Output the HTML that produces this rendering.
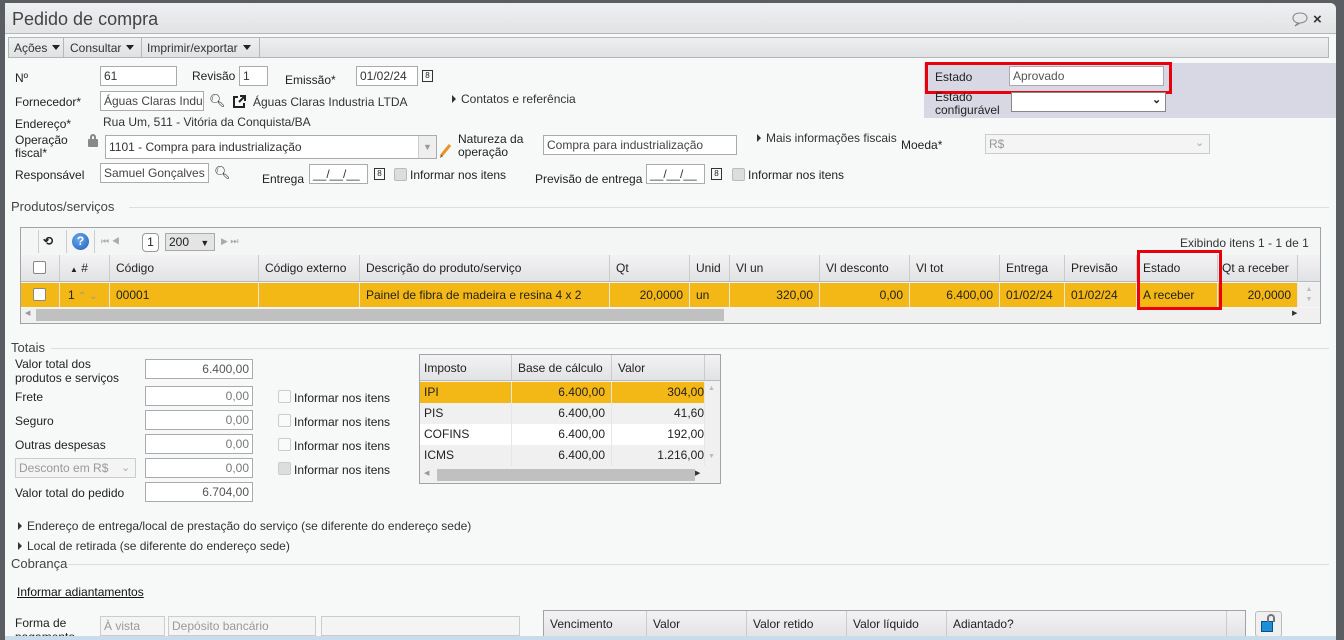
<!DOCTYPE html>
<html><head><meta charset="utf-8">
<style>
*{box-sizing:border-box;margin:0;padding:0}
body{width:1344px;height:640px;overflow:hidden;background:#5a5e63;font-family:"Liberation Sans",sans-serif;font-size:12px;color:#222;position:relative}
.a{position:absolute;white-space:nowrap}
.win{position:absolute;left:5px;top:3px;width:1331px;height:637px;background:#f7f8f8;border-top-right-radius:6px;overflow:hidden}
.inp{position:absolute;background:#fff;border:1px solid #a9abae;height:20px;padding:2px 3px;font-size:12px;color:#333;white-space:nowrap;overflow:hidden}
.dis{background:#f4f4f4;color:#999;border-color:#ccc}
.r{text-align:right}
.cb{position:absolute;width:13px;height:13px;border:1px solid #bbb;background:#fafafa;border-radius:2px}
.leg{position:absolute;height:1px;background:#ddd}
.grid{position:absolute;border:1px solid #a0a3a7;background:#fff}
.hd{position:absolute;background:linear-gradient(#f3f3f4,#e1e2e4);border-bottom:1px solid #b8babd}
.c{position:absolute;top:0;height:100%;border-right:1px solid #c9cbce;padding:0 6px;line-height:26px;white-space:nowrap;overflow:hidden}
.row .c{border-right:1px solid #e6e6e6;line-height:24px}
.tri{display:inline-block;width:0;height:0;border-left:4px solid #333;border-top:4px solid transparent;border-bottom:4px solid transparent;margin-right:5px;vertical-align:0}
.dd{display:inline-block;width:0;height:0;border-top:5px solid #222;border-left:4px solid transparent;border-right:4px solid transparent;margin-left:5px;vertical-align:2px}
</style></head><body>
<div class="win">
 <div class="a" style="left:0;top:0;width:1331px;height:31px;background:linear-gradient(#eeeff0,#e2e3e5);border-bottom:1px solid #b4b6b9"></div>
 <div class="a" style="left:7px;top:6px;font-size:18px;color:#444">Pedido de compra</div>
 <svg class="a" style="left:1286px;top:8px" width="18" height="16" viewBox="0 0 18 16"><path d="M9 2C4.5 2 2 4.3 2 7s2.3 4.6 5 4.9L4 15l5-3c4.2-.2 7-2.3 7-5s-2.5-5-7-5z" fill="none" stroke="#888" stroke-width="1.1"/></svg>
 <div class="a" style="left:1308px;top:8px;font-size:15px;font-weight:bold;color:#333">×</div>
 <div class="a" style="left:3px;top:34px;width:1321px;height:21px;background:linear-gradient(#eeeff0,#e0e1e3);border:1px solid #b4b6b9"></div>
 <div class="a" style="left:9px;top:38px;color:#333">Ações<span class="dd"></span></div>
 <div class="a" style="left:58px;top:35px;width:1px;height:19px;background:#b4b6b9"></div>
 <div class="a" style="left:65px;top:38px;color:#333">Consultar<span class="dd"></span></div>
 <div class="a" style="left:136px;top:35px;width:1px;height:19px;background:#b4b6b9"></div>
 <div class="a" style="left:142px;top:38px;color:#333">Imprimir/exportar<span class="dd"></span></div>
 <div class="a" style="left:254px;top:35px;width:1px;height:19px;background:#b4b6b9"></div>

 <div class="a" style="left:919px;top:60px;width:412px;height:55px;background:#d8d8e4"></div>
 <div class="a" style="left:920px;top:59px;width:247px;height:32px;border:3px solid #e8000b"></div>
 <div class="a" style="left:930px;top:67px">Estado</div>
 <div class="inp" style="left:1004px;top:63px;width:155px;color:#555">Aprovado</div>
 <div class="a" style="left:930px;top:88px;line-height:13px">Estado<br>configurável</div>
 <div class="inp" style="left:1006px;top:89px;width:155px;border-color:#888"></div>
 <div class="a" style="left:1147px;top:90px;font-size:11px;font-weight:bold">⌄</div>

 <div class="a" style="left:10px;top:68px">Nº</div>
 <div class="inp" style="left:95px;top:63px;width:77px">61</div>
 <div class="a" style="left:187px;top:66px">Revisão</div>
 <div class="inp" style="left:234px;top:63px;width:29px">1</div>
 <div class="a" style="left:280px;top:70px">Emissão*</div>
 <div class="inp" style="left:351px;top:63px;width:62px">01/02/24</div>
 <div class="a" style="left:417px;top:67px;width:11px;height:12px;border:1px solid #333;font-size:8px;text-align:center;line-height:10px">8</div>

 <div class="a" style="left:10px;top:92px">Fornecedor*</div>
 <div class="inp" style="left:95px;top:88px;width:104px;color:#444">Águas Claras Indus</div>
 <div class="a" style="left:204px;top:90px;font-size:13px">&#x1F50D;&#xFE0E;</div>
 <svg class="a" style="left:226px;top:91px" width="16" height="16" viewBox="0 0 16 16"><path d="M7 3H3v10h10V9" fill="none" stroke="#222" stroke-width="2"/><path d="M8 8l6-6M9 2h5v5" fill="none" stroke="#222" stroke-width="2"/></svg>
 <div class="a" style="left:248px;top:92px;color:#333">Águas Claras Industria LTDA</div>
 <div class="a" style="left:447px;top:89px;color:#333"><span class="tri"></span>Contatos e referência</div>

 <div class="a" style="left:10px;top:114px">Endereço*</div>
 <div class="a" style="left:98px;top:112px;color:#333">Rua Um, 511 - Vitória da Conquista/BA</div>

 <div class="a" style="left:10px;top:131px;line-height:13px">Operação<br>fiscal*</div>
 <div class="a" style="left:83px;top:136px;width:10px;height:8px;background:#888;border-radius:1px"></div>
 <div class="a" style="left:85px;top:131px;width:6px;height:7px;border:2px solid #888;border-bottom:none;border-radius:3px 3px 0 0"></div>
 <div class="inp" style="left:100px;top:132px;width:332px;height:24px;padding-top:4px">1101 - Compra para industrialização</div>
 <div class="a" style="left:413px;top:133px;width:18px;height:22px;background:#eee;border-left:1px solid #ccc;color:#999;text-align:center;font-size:9px;line-height:22px">▼</div>
 <svg class="a" style="left:434px;top:138px" width="14" height="18" viewBox="0 0 14 18"><path d="M2 15L11 4" stroke="#e8942a" stroke-width="3"/><path d="M1 17l1-3 2 1z" fill="#555"/></svg>
 <div class="a" style="left:453px;top:130px;line-height:13px">Natureza da<br>operação</div>
 <div class="inp" style="left:538px;top:132px;width:194px;color:#444">Compra para industrialização</div>
 <div class="a" style="left:752px;top:128px;color:#333"><span class="tri"></span>Mais informações fiscais</div>
 <div class="a" style="left:896px;top:135px">Moeda*</div>
 <div class="inp dis" style="left:980px;top:131px;width:225px">R$</div>
 <div class="a" style="left:1190px;top:133px;color:#aaa;font-size:11px">⌄</div>

 <div class="a" style="left:10px;top:165px">Responsável</div>
 <div class="inp" style="left:95px;top:160px;width:109px;color:#444">Samuel Gonçalves</div>
 <div class="a" style="left:209px;top:162px;font-size:13px">&#x1F50D;&#xFE0E;</div>
 <div class="a" style="left:257px;top:169px">Entrega</div>
 <div class="inp" style="left:304px;top:161px;width:59px">__/__/__</div>
 <div class="a" style="left:369px;top:165px;width:11px;height:12px;border:1px solid #333;font-size:8px;text-align:center;line-height:10px">8</div>
 <div class="cb" style="left:389px;top:165px;background:#ddd"></div>
 <div class="a" style="left:405px;top:165px">Informar nos itens</div>
 <div class="a" style="left:530px;top:169px">Previsão de entrega</div>
 <div class="inp" style="left:641px;top:161px;width:59px">__/__/__</div>
 <div class="a" style="left:706px;top:165px;width:11px;height:12px;border:1px solid #333;font-size:8px;text-align:center;line-height:10px">8</div>
 <div class="cb" style="left:727px;top:165px;background:#ddd"></div>
 <div class="a" style="left:743px;top:165px">Informar nos itens</div>

 <div class="a" style="left:6px;top:196px;font-size:13px;color:#444">Produtos/serviços</div>
 <div class="leg" style="left:124px;top:204px;width:1200px"></div>
 <div class="grid" style="left:15px;top:224px;width:1301px;height:97px;background:#f4f5f5">
  <div class="a" style="left:17px;top:2px;width:1px;height:23px;background:#ccc"></div>
  <div class="a" style="left:22px;top:6px;font-size:12px;font-weight:bold">⟲</div>
  <div class="a" style="left:45px;top:2px;width:1px;height:23px;background:#ccc"></div>
  <div class="a" style="left:51px;top:5px;width:17px;height:17px;border-radius:50%;background:radial-gradient(circle at 40% 35%,#6aa9ec,#1f5fb8);color:#fff;font-weight:bold;font-size:12px;text-align:center;line-height:17px">?</div>
  <div class="a" style="left:73px;top:2px;width:1px;height:23px;background:#ccc"></div>
  <div class="a" style="left:80px;top:8px;color:#aaa;font-size:9px">⏮ ◀</div>
  <div class="a" style="left:121px;top:5px;width:17px;height:19px;border:1px solid #999;border-radius:4px;background:#fff;text-align:center;line-height:17px">1</div>
  <div class="a" style="left:144px;top:5px;width:50px;height:18px;border:1px solid #aaa;background:#e4e4e4;padding-left:3px;line-height:16px">200 <span style="font-size:9px;margin-left:8px">▼</span></div>
  <div class="a" style="left:200px;top:8px;color:#aaa;font-size:9px">▶ ⏭</div>
  <div class="a" style="left:1159px;top:8px;color:#333">Exibindo itens 1 - 1 de 1</div>
  <div class="hd" style="left:0;top:27px;width:1299px;height:27px">
   <div class="c" style="left:0;width:39px"><div class="cb" style="left:12px;top:6px;background:#fff;border-color:#888"></div></div>
   <div class="c" style="left:39px;width:50px;padding-left:10px"><span style="font-size:8px">▲</span> #</div>
   <div class="c" style="left:89px;width:149px">Código</div>
   <div class="c" style="left:238px;width:101px">Código externo</div>
   <div class="c" style="left:339px;width:250px">Descrição do produto/serviço</div>
   <div class="c" style="left:589px;width:80px">Qt</div>
   <div class="c" style="left:669px;width:40px">Unid</div>
   <div class="c" style="left:709px;width:90px">Vl un</div>
   <div class="c" style="left:799px;width:90px">Vl desconto</div>
   <div class="c" style="left:889px;width:90px">Vl tot</div>
   <div class="c" style="left:979px;width:65px">Entrega</div>
   <div class="c" style="left:1044px;width:72px">Previsão</div>
   <div class="c" style="left:1116px;width:81px">Estado</div>
   <div class="c" style="left:1197px;width:80px;padding:0 4px">Qt a receber</div>
  </div>
  <div class="row a" style="left:0;top:55px;width:1277px;height:24px;background:#f3b815">
   <div class="c" style="left:0;width:39px"><div class="cb" style="left:12px;top:5px;background:#fff;border-color:#888"></div></div>
   <div class="c" style="left:39px;width:50px;padding-left:8px">1 <span style="color:#999;font-size:10px">⌃ ⌄</span></div>
   <div class="c" style="left:89px;width:149px">00001</div>
   <div class="c" style="left:238px;width:101px"></div>
   <div class="c" style="left:339px;width:250px">Painel de fibra de madeira e resina 4 x 2</div>
   <div class="c r" style="left:589px;width:80px">20,0000</div>
   <div class="c" style="left:669px;width:40px">un</div>
   <div class="c r" style="left:709px;width:90px">320,00</div>
   <div class="c r" style="left:799px;width:90px">0,00</div>
   <div class="c r" style="left:889px;width:90px">6.400,00</div>
   <div class="c" style="left:979px;width:65px">01/02/24</div>
   <div class="c" style="left:1044px;width:72px">01/02/24</div>
   <div class="c" style="left:1116px;width:81px">A receber</div>
   <div class="c r" style="left:1197px;width:80px">20,0000</div>
  </div>
  <div class="a" style="left:1277px;top:55px;width:22px;height:24px;background:#f0f0f0;color:#bbb;font-size:7px;text-align:center;line-height:10px;padding-top:2px">▲<br>▼</div>
  <div class="a" style="left:0;top:80px;width:1299px;height:15px;background:#f0f0f0"></div>
  <div class="a" style="left:15px;top:81px;width:688px;height:12px;background:#c0c0c0"></div>
  <div class="a" style="left:4px;top:81px;font-size:7px;color:#999">◀</div>
  <div class="a" style="left:1271px;top:81px;font-size:7px;color:#333">▶</div>
 </div>
 <div class="a" style="left:1132px;top:247px;width:85px;height:60px;border:3px solid #e8000b"></div>

 <div class="a" style="left:6px;top:337px;font-size:13px;color:#444">Totais</div>
 <div class="leg" style="left:46px;top:345px;width:1278px"></div>
 <div class="a" style="left:10px;top:354px;line-height:14px">Valor total dos<br>produtos e serviços</div>
 <div class="inp r" style="left:140px;top:356px;width:108px;color:#555">6.400,00</div>
 <div class="a" style="left:10px;top:387px">Frete</div>
 <div class="inp r" style="left:140px;top:383px;width:108px;color:#777">0,00</div>
 <div class="a" style="left:10px;top:411px">Seguro</div>
 <div class="inp r" style="left:140px;top:407px;width:108px;color:#777">0,00</div>
 <div class="a" style="left:10px;top:435px">Outras despesas</div>
 <div class="inp r" style="left:140px;top:431px;width:108px;color:#777">0,00</div>
 <div class="inp dis" style="left:10px;top:455px;width:121px">Desconto em R$</div>
 <div class="a" style="left:116px;top:458px;color:#aaa;font-size:11px">⌄</div>
 <div class="inp r" style="left:140px;top:455px;width:108px;color:#777">0,00</div>
 <div class="a" style="left:10px;top:483px">Valor total do pedido</div>
 <div class="inp r" style="left:140px;top:479px;width:108px;color:#555">6.704,00</div>
 <div class="cb" style="left:273px;top:387px;background:#fafafa;border-color:#ccc"></div><div class="a" style="left:289px;top:388px">Informar nos itens</div>
 <div class="cb" style="left:273px;top:411px;background:#fafafa;border-color:#ccc"></div><div class="a" style="left:289px;top:412px">Informar nos itens</div>
 <div class="cb" style="left:273px;top:435px;background:#fafafa;border-color:#ccc"></div><div class="a" style="left:289px;top:436px">Informar nos itens</div>
 <div class="cb" style="left:273px;top:459px;background:#ddd;border-color:#ccc"></div><div class="a" style="left:289px;top:460px">Informar nos itens</div>

 <div class="grid" style="left:414px;top:351px;width:302px;height:130px;background:#f0f0f0">
  <div class="hd" style="left:0;top:0;width:300px;height:26px">
   <div class="c" style="left:0;width:92px;padding-left:4px">Imposto</div>
   <div class="c" style="left:92px;width:100px">Base de cálculo</div>
   <div class="c" style="left:192px;width:93px">Valor</div>
  </div>
  <div class="row a" style="left:0;top:27px;width:285px;height:21px;background:#f3b815"><div class="c" style="left:0;width:92px;padding-left:4px;line-height:21px">IPI</div><div class="c r" style="left:92px;width:100px;line-height:21px">6.400,00</div><div class="c r" style="left:192px;width:93px;line-height:21px;padding-right:0">304,00</div></div>
  <div class="row a" style="left:0;top:48px;width:285px;height:21px;background:#f0f0f1"><div class="c" style="left:0;width:92px;padding-left:4px;line-height:21px">PIS</div><div class="c r" style="left:92px;width:100px;line-height:21px">6.400,00</div><div class="c r" style="left:192px;width:93px;line-height:21px;padding-right:0">41,60</div></div>
  <div class="row a" style="left:0;top:69px;width:285px;height:21px;background:#fff"><div class="c" style="left:0;width:92px;padding-left:4px;line-height:21px">COFINS</div><div class="c r" style="left:92px;width:100px;line-height:21px">6.400,00</div><div class="c r" style="left:192px;width:93px;line-height:21px;padding-right:0">192,00</div></div>
  <div class="row a" style="left:0;top:90px;width:285px;height:21px;background:#f0f0f1"><div class="c" style="left:0;width:92px;padding-left:4px;line-height:21px">ICMS</div><div class="c r" style="left:92px;width:100px;line-height:21px">6.400,00</div><div class="c r" style="left:192px;width:93px;line-height:21px;padding-right:0">1.216,00</div></div>
  <div class="a" style="left:288px;top:30px;font-size:7px;color:#bbb">▲</div>
  <div class="a" style="left:288px;top:98px;font-size:7px;color:#bbb">▼</div>
  <div class="a" style="left:17px;top:114px;width:258px;height:12px;background:#c0c0c0"></div>
  <div class="a" style="left:4px;top:114px;font-size:7px;color:#999">◀</div>
  <div class="a" style="left:275px;top:114px;font-size:7px;color:#333">▶</div>
 </div>

 <div class="a" style="left:13px;top:516px;color:#333"><span class="tri"></span>Endereço de entrega/local de prestação do serviço (se diferente do endereço sede)</div>
 <div class="a" style="left:13px;top:536px;color:#333"><span class="tri"></span>Local de retirada (se diferente do endereço sede)</div>
 <div class="a" style="left:6px;top:553px;font-size:13px;color:#444">Cobrança</div>
 <div class="leg" style="left:63px;top:561px;width:1261px"></div>
 <div class="a" style="left:12px;top:582px;text-decoration:underline;color:#111">Informar adiantamentos</div>
 <div class="a" style="left:10px;top:613px;line-height:14px">Forma de<br>pagamento</div>
 <div class="inp dis" style="left:95px;top:613px;width:65px">À vista</div>
 <div class="inp dis" style="left:163px;top:613px;width:148px">Depósito bancário</div>
 <div class="inp dis" style="left:316px;top:613px;width:199px"></div>
 <div class="hd" style="left:538px;top:607px;width:703px;height:30px;border:1px solid #a0a3a7">
  <div class="c" style="left:0;width:103px">Vencimento</div>
  <div class="c" style="left:103px;width:100px">Valor</div>
  <div class="c" style="left:203px;width:100px">Valor retido</div>
  <div class="c" style="left:303px;width:100px">Valor líquido</div>
  <div class="c" style="left:403px;width:280px">Adiantado?</div>
 </div>
 <div class="a" style="left:1250px;top:608px;width:27px;height:26px;border:1px solid #bbb;border-radius:3px;background:#f0f0f0"></div>
 <div class="a" style="left:1256px;top:618px;width:12px;height:11px;background:#1c8fd6;border:1px solid #0a4f8a"></div>
 <div class="a" style="left:1262px;top:611px;width:8px;height:8px;border:2px solid #777;border-bottom:none;border-radius:4px 4px 0 0"></div>
 <div class="a" style="left:0;top:633px;width:1331px;height:4px;background:#c8dcec"></div>
</div>
</body></html>
